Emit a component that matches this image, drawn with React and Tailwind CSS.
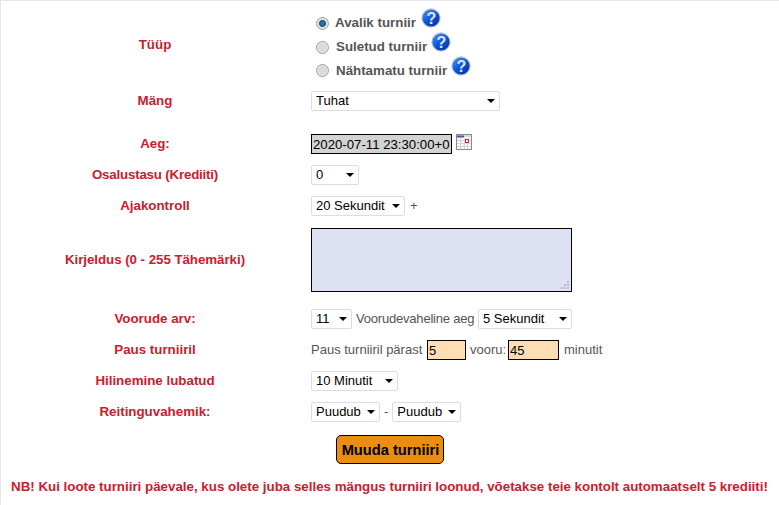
const font = 'font-["Liberation_Sans",Arial,sans-serif]';

function HelpIcon() {
  return (
    <svg width="20" height="20" viewBox="0 0 20 20" className="block shrink-0">
      <defs>
        <linearGradient id="helpBlue" x1="0.1" y1="0.1" x2="0.8" y2="1">
          <stop offset="0" stopColor="#3f8cf0" />
          <stop offset="0.5" stopColor="#0b55d8" />
          <stop offset="1" stopColor="#0a2fa8" />
        </linearGradient>
      </defs>
      <circle cx="10" cy="10" r="9.7" fill="#c4c8d0" />
      <circle cx="10" cy="10" r="8.6" fill="url(#helpBlue)" />
      <text x="10.5" y="15.5" textAnchor="middle" fontSize="16" fontWeight="700" fill="#dfe6f2" fontFamily="Liberation Sans, sans-serif">?</text>
    </svg>
  );
}

function CalendarIcon() {
  return (
    <svg width="16" height="16" viewBox="0 0 16 16" className="block">
      <rect x="0.5" y="0.5" width="15" height="15" fill="#f6f6f6" stroke="#8a8a8a" />
      <rect x="1" y="1" width="14" height="2" fill="#d8d8d8" />
      <rect x="1" y="1.5" width="7" height="2" fill="#4f52b0" />
      <path d="M1 6.5h14M1 9.5h14M1 12.5h14M4.5 4v11M8.5 4v11M11.5 4v11" stroke="#d6d6d6" strokeWidth="1" />
      <rect x="9.5" y="5.5" width="3" height="3" fill="#fff" stroke="#a33030" />
    </svg>
  );
}

function ResizeGrip() {
  const dots = [
    [6, 0],
    [3, 3], [6, 3],
    [0, 6], [3, 6], [6, 6],
  ];
  return (
    <svg width="8" height="8" viewBox="0 0 8 8" className="pointer-events-none absolute bottom-[3px] right-[3px]">
      {dots.map(([x, y]) => (
        <rect key={`${x}-${y}`} x={x} y={y} width="2" height="2" fill="#b9bcc8" />
      ))}
    </svg>
  );
}

function Radio({ checked }) {
  return (
    <span className="flex h-[13px] w-[13px] shrink-0 items-center justify-center rounded-full border border-[#a0a0a0] bg-[#dadada] shadow-[inset_0_0_2px_#fff]">
      {checked && <span className="h-[7px] w-[7px] rounded-full border border-[#0c3f5c] bg-[#1d78a8]" />}
    </span>
  );
}

function Select({ value, width }) {
  return (
    <span className="relative block h-5 shrink-0" style={{ width }}>
      <select
        defaultValue={value}
        className="block h-5 w-full appearance-none rounded-[2px] border border-[#dcdce4] bg-white pl-1 text-[13px] leading-[18px] text-black outline-none"
      >
        <option>{value}</option>
      </select>
      <span className="pointer-events-none absolute right-[5px] top-[8px] h-0 w-0 border-x-[4px] border-t-[4px] border-x-transparent border-t-black" />
    </span>
  );
}

function Row({ label, className = 'h-5', children }) {
  return (
    <div className={`flex items-center ${className}`}>
      <div className="mr-[2px] w-[308px] shrink-0 text-center text-[13.33px] font-bold text-[#c8202c]">{label}</div>
      <div className="flex items-center whitespace-nowrap text-[13px] text-[#555]">{children}</div>
    </div>
  );
}

function RadioLine({ label, checked, labelGap, iconGap, height }) {
  return (
    <div className={`flex items-center pl-[5px] ${height}`}>
      <Radio checked={checked} />
      <span className={`${labelGap} text-[13.33px] font-bold text-[#555]`}>{label}</span>
      <span className={`${iconGap} -mt-[10px]`}>
        <HelpIcon />
      </span>
    </div>
  );
}

export default function App() {
  return (
    <div className={`${font} h-[505px] w-[779px] overflow-hidden border-l border-t border-[#e6e6e6] bg-white`}>
      <div className="flex h-[78px] pt-[10px]">
        <div className="mr-[2px] flex h-[68px] w-[308px] shrink-0 items-center justify-center pb-[1px] text-[13.33px] font-bold text-[#c8202c]">Tüüp</div>
        <div>
          <RadioLine label="Avalik turniir" checked labelGap="ml-[6px]" iconGap="ml-[5px]" height="h-6" />
          <RadioLine label="Suletud turniir" labelGap="ml-[7px]" iconGap="ml-[4px]" height="h-6" />
          <RadioLine label="Nähtamatu turniir" labelGap="ml-[7px]" iconGap="ml-[4px]" height="h-[23px]" />
        </div>
      </div>
      <div className="mt-[12px] flex flex-col">
        <Row label="Mäng">
          <Select value="Tuhat" width={189} />
        </Row>
        <Row label="Aeg:" className="mt-[23px] h-5">
          <input
            readOnly
            value="2020-07-11 23:30:00+0"
            className="h-5 w-[141px] border border-black bg-[#d3d3d3] pl-[1px] text-[13.2px] text-black outline-none"
          />
          <span className="ml-[4px] -mt-[4px]">
            <CalendarIcon />
          </span>
        </Row>
        <Row label={<span className="tracking-[-0.2px]">Osalustasu (Krediiti)</span>} className="mt-[11px] h-5">
          <Select value="0" width={48} />
        </Row>
        <Row label="Ajakontroll" className="mt-[11px] h-5">
          <Select value="20 Sekundit" width={94} />
          <span className="ml-[5px]">+</span>
        </Row>
        <Row label={<span className="tracking-[-0.05px]">Kirjeldus (0 - 255 Tähemärki)</span>} className="mt-[12px] h-16">
          <span className="relative block h-16 w-[261px]">
            <textarea className="block h-16 w-full resize-none border border-black bg-[#dde1f3] outline-none" />
            <ResizeGrip />
          </span>
        </Row>
        <Row label="Voorude arv:" className="mt-[17px] h-5">
          <Select value="11" width={41} />
          <span className="ml-[4px] w-[118px] tracking-[-0.2px]">Voorudevaheline aeg</span>
          <span className="ml-[4px]">
            <Select value="5 Sekundit" width={94} />
          </span>
        </Row>
        <Row label="Paus turniiril" className="mt-[11px] h-5">
          <span className="w-[112px]">Paus turniiril pärast</span>
          <input readOnly value="5" className="ml-[4px] h-5 w-[39px] border border-black bg-[#ffdeb3] pl-[1px] text-[13px] text-black outline-none" />
          <span className="ml-[4px] w-[33px]">vooru:</span>
          <input readOnly value="45" className="ml-[5px] h-5 w-[51px] border border-black bg-[#ffdeb3] pl-[1px] text-[13px] text-black outline-none" />
          <span className="ml-[5px]">minutit</span>
        </Row>
        <Row label="Hilinemine lubatud" className="mt-[11px] h-5">
          <Select value="10 Minutit" width={87} />
        </Row>
        <Row label="Reitinguvahemik:" className="mt-[11px] h-5">
          <Select value="Puudub" width={69} />
          <span className="mx-[4px]">-</span>
          <Select value="Puudub" width={69} />
        </Row>
      </div>
      <div className="mt-[13px] flex justify-center">
        <button className="h-[29px] w-[108px] rounded-[5px] border border-black bg-[#ea8d10] pl-[1px] text-[14.67px] font-bold text-black">
          Muuda turniiri
        </button>
      </div>
      <p className="mt-[13px] whitespace-nowrap pl-[10px] text-[13.33px] font-bold text-[#c8202c]">
        NB! Kui loote turniiri päevale, kus olete juba selles mängus turniiri loonud, võetakse teie kontolt automaatselt 5 krediiti!
      </p>
    </div>
  );
}
